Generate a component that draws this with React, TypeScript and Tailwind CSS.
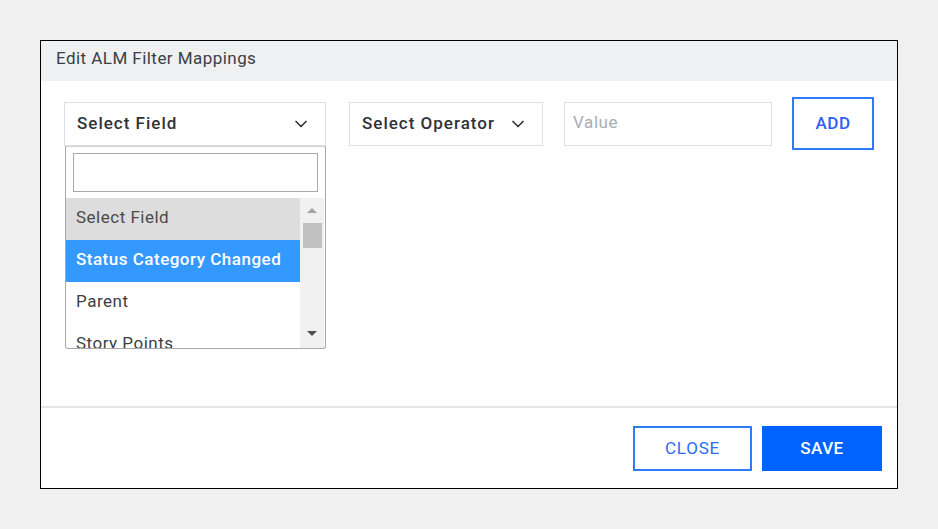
import { ChevronDown } from "lucide-react";

const font = { fontFamily: "Roboto, 'Noto Sans', sans-serif" };

const opciones = ["Select Field", "Status Category Changed", "Parent", "Story Points"];

function SelectBox({ label, width }: { label: string; width: string }) {
  return (
    <div
      className={`${width} h-[44px] border border-[#dcdfe3] bg-white flex items-center justify-between pl-[12px] pr-[14px]`}
    >
      <span className="text-[17px] font-medium tracking-[1px] text-[#2f3237]">{label}</span>
      <ChevronDown size={20} strokeWidth={2} className="text-[#2f3237]" />
    </div>
  );
}

export default function App() {
  return (
    <div className="min-h-[529px] bg-[#f0f0f0] pt-[40px] pl-[40px]" style={font}>
      <div className="w-[858px] h-[449px] border border-black bg-white flex flex-col">
        {/* Header */}
        <div className="h-[40px] bg-[#eff0f1] flex items-center px-[15px] pb-[5px]">
          <span className="text-[17px] tracking-[0.45px] text-[#3a3f45]">Edit ALM Filter Mappings</span>
        </div>

        {/* Body */}
        <div className="h-[325px] pt-[16px] pl-[23px]">
          <div className="flex items-center">
            <div className="relative">
              <SelectBox label="Select Field" width="w-[262px]" />
              {/* Dropdown abierto */}
              <div className="absolute left-[1px] top-[44px] w-[261px] h-[203px] bg-white border border-[#a9a9a9] border-t-[#d0d0d0] rounded-b-[3px] overflow-hidden z-10">
                <div className="px-[7px] pt-[6px]">
                  <div className="h-[39px] border border-[#a9a9a9] bg-white"></div>
                </div>
                <div className="mt-[6px] flex">
                  <div className="w-[234px] h-[151px] overflow-hidden">
                    {opciones.map((o, i) => (
                      <div
                        key={o}
                        className={`h-[42px] flex items-center pl-[10px] pb-[2px] text-[17px] tracking-[0.5px] ${
                          i === 0
                            ? "bg-[#dddddd] text-[#4a4a4a]"
                            : i === 1
                            ? "bg-[#3399ff] text-white font-medium"
                            : "text-[#3a3f45]"
                        }`}
                      >
                        {o}
                      </div>
                    ))}
                  </div>
                  {/* Scrollbar */}
                  <div className="w-[24px] h-[151px] bg-[#f1f1f1] flex flex-col items-center">
                    <div className="h-[25px] flex items-center justify-center">
                      <div className="w-0 h-0 border-l-[5px] border-r-[5px] border-b-[5px] border-l-transparent border-r-transparent border-b-[#a3a3a3]"></div>
                    </div>
                    <div className="w-[19px] h-[25px] bg-[#c1c1c1]"></div>
                    <div className="flex-1"></div>
                    <div className="h-[30px] flex items-center justify-center">
                      <div className="w-0 h-0 border-l-[5px] border-r-[5px] border-t-[5px] border-l-transparent border-r-transparent border-t-[#505050]"></div>
                    </div>
                  </div>
                </div>
              </div>
            </div>
            <div className="ml-[23px]">
              <SelectBox label="Select Operator" width="w-[194px]" />
            </div>
            <div className="ml-[21px] w-[208px] h-[44px] border border-[#dcdfe3] flex items-center pl-[8px] pb-[2px]">
              <span className="text-[17px] tracking-[0.6px] text-[#a8adb3]">Value</span>
            </div>
            <button className="ml-[20px] w-[82px] h-[53px] border-2 border-[#2d7bf7] text-[#2d5ff5] text-[17px] font-medium tracking-[0.5px]">
              ADD
            </button>
          </div>
        </div>

        {/* Footer */}
        <div className="border-t-2 border-[#e6e6e6] flex-1 flex justify-end items-start pt-[18px] pr-[15px] gap-[10px]">
          <button className="w-[119px] h-[45px] border-2 border-[#2d7bf7] text-[#2d6af5] text-[17px] tracking-[0.8px]">
            CLOSE
          </button>
          <button className="w-[120px] h-[45px] bg-[#0062ff] text-white text-[17px] font-medium tracking-[0.5px]">
            SAVE
          </button>
        </div>
      </div>
    </div>
  );
}
